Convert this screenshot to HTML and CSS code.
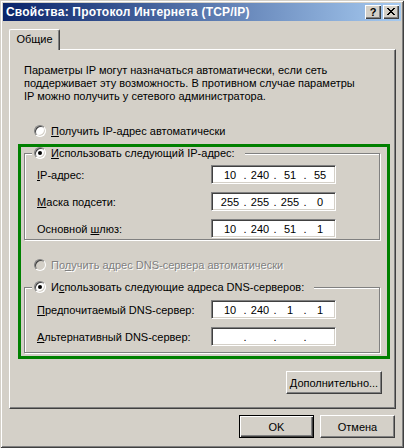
FILE: index.html
```html
<!DOCTYPE html>
<html lang="ru">
<head>
<meta charset="utf-8">
<title>Свойства: Протокол Интернета (TCP/IP)</title>
<link rel="stylesheet" href="styles.css">
</head>
<body>
<div class="window">
  <div class="titlebar">
    <span class="title">Свойства: Протокол Интернета (TCP/IP)</span>
    <div class="caption-btns">
      <span class="cbtn help">?</span>
      <span class="cbtn close"><svg width="8" height="7" viewBox="0 0 8 7" shape-rendering="crispEdges"><path d="M0 0h2v1H0zM6 0h2v1H6zM1 1h2v1H1zM5 1h2v1H5zM2 2h4v1H2zM3 3h2v1H3zM2 4h4v1H2zM1 5h2v1H1zM5 5h2v1H5zM0 6h2v1H0zM6 6h2v1H6z" fill="#000"/></svg></span>
    </div>
  </div>
  <div class="content">
    <div class="tabs"><div class="tab">Общие</div></div>
    <div class="panel">
      <p class="intro">Параметры IP могут назначаться автоматически, если сеть<br>поддерживает эту возможность. В противном случае параметры<br>IP можно получить у сетевого администратора.</p>
      <div class="opt opt-top"><span class="radio"></span><span><u>П</u>олучить IP-адрес автоматически</span></div>
      <div class="highlight">
        <fieldset class="group g-ip">
          <legend class="opt"><span class="radio checked"></span><span><u>И</u>спользовать следующий IP-адрес:</span></legend>
          <div class="field"><span class="lbl"><u>I</u>P-адрес:</span><div class="ipbox"><span>10</span><i>.</i><span>240</span><i>.</i><span>51</span><i>.</i><span>55</span></div></div>
          <div class="field"><span class="lbl"><u>М</u>аска подсети:</span><div class="ipbox"><span>255</span><i>.</i><span>255</span><i>.</i><span>255</span><i>.</i><span>0</span></div></div>
          <div class="field"><span class="lbl">Основной <u>ш</u>люз:</span><div class="ipbox"><span>10</span><i>.</i><span>240</span><i>.</i><span>51</span><i>.</i><span>1</span></div></div>
        </fieldset>
        <div class="opt opt-dns disabled"><span class="radio"></span><span>По<u>л</u>учить адрес DNS-сервера автоматически</span></div>
        <fieldset class="group g-dns">
          <legend class="opt"><span class="radio checked"></span><span>И<u>с</u>пользовать следующие адреса DNS-серверов:</span></legend>
          <div class="field"><span class="lbl"><u>П</u>редпочитаемый DNS-сервер:</span><div class="ipbox"><span>10</span><i>.</i><span>240</span><i>.</i><span>1</span><i>.</i><span>1</span></div></div>
          <div class="field"><span class="lbl"><u>А</u>льтернативный DNS-сервер:</span><div class="ipbox"><span></span><i>.</i><span></span><i>.</i><span></span><i>.</i><span></span></div></div>
        </fieldset>
      </div>
      <div class="adv-row"><button class="btn adv"><u>Д</u>ополнительно...</button></div>
    </div>
    <div class="actions">
      <button class="btn default">OK</button>
      <button class="btn">Отмена</button>
    </div>
  </div>
</div>
</body>
</html>
```
FILE: styles.css
```css
html, body {
  margin: 0;
  padding: 0;
}
body {
  width: 404px;
  height: 448px;
  background: #d4d0c8;
  font: 11px "Liberation Sans", Arial, sans-serif;
  color: #000;
}
.window {
  box-sizing: border-box;
  width: 404px;
  height: 448px;
  padding: 3px;
  background: #d4d0c8;
  box-shadow: inset 1px 1px 0 #d4d0c8, inset -1px -1px 0 #404040, inset 2px 2px 0 #fff, inset -2px -2px 0 #808080;
  display: flex;
  flex-direction: column;
}
.titlebar {
  height: 18px;
  flex: none;
  background: linear-gradient(to right, #0a246a, #a6caf0);
  display: flex;
  align-items: center;
  padding: 0 2px 0 2px;
}
.title {
  flex: 1;
  color: #fff;
  font-weight: bold;
  font-size: 12px;
  letter-spacing: 0.2px;
  white-space: nowrap;
  padding-left: 1px;
}
.caption-btns {
  display: flex;
  gap: 2px;
}
.cbtn {
  box-sizing: border-box;
  width: 16px;
  height: 14px;
  background: #d4d0c8;
  box-shadow: inset 1px 1px 0 #fff, inset -1px -1px 0 #404040, inset -2px -2px 0 #808080;
  display: flex;
  align-items: center;
  justify-content: center;
}
.cbtn.help {
  font-weight: bold;
  font-size: 11px;
  line-height: 14px;
  padding-bottom: 1px;
}
.cbtn.close svg {
  display: block;
  margin-bottom: 1px;
}
.content {
  padding: 8px 5px 0 6px;
}
.tabs {
  display: flex;
}
.tab {
  box-sizing: border-box;
  width: 51px;
  height: 21px;
  margin-bottom: -1px;
  border: 1px solid;
  border-color: #fff #404040 transparent #fff;
  border-bottom: 0;
  border-radius: 2px 2px 0 0;
  box-shadow: inset -1px 0 0 #808080;
  background: #d4d0c8;
  position: relative;
  z-index: 1;
  text-align: center;
  line-height: 19px;
}
.panel {
  box-sizing: border-box;
  height: 360px;
  border: 1px solid;
  border-color: #fff #404040 #404040 #fff;
  box-shadow: inset -1px -1px 0 #808080;
}
.intro {
  margin: 14px 0 0 14px;
  line-height: 13px;
  white-space: nowrap;
}
.opt {
  display: flex;
  align-items: center;
  gap: 5px;
  height: 14px;
  white-space: nowrap;
}
.opt-top {
  margin: 21px 0 0 24px;
}
.radio {
  box-sizing: border-box;
  flex: none;
  width: 12px;
  height: 12px;
  border-radius: 50%;
  background: #fff;
  border: 1px solid;
  border-color: #808080 #fff #fff #808080;
  box-shadow: inset 1px 1px 0 #404040, inset -1px -1px 0 #d4d0c8;
  position: relative;
}
.radio.checked::after {
  content: "";
  position: absolute;
  left: 3px;
  top: 3px;
  width: 4px;
  height: 4px;
  border-radius: 50%;
  background: #000;
}
.disabled {
  color: #808080;
  text-shadow: 1px 1px 0 #fff;
}
.disabled .radio {
  background: #d4d0c8;
}
.highlight {
  border: 3px solid #008000;
  margin: 6px 5px 0 8px;
  padding: 0 0 3px 0;
}
.group {
  margin: 0 7px 0 3px;
  border: 1px solid #808080;
  box-shadow: 1px 1px 0 #fff, inset 1px 1px 0 #fff;
  min-width: 0;
}
.group legend {
  margin-left: 7px;
  padding: 0 10px 0 2px;
  height: 12px;
  line-height: 12px;
  background: #d4d0c8;
}
.g-ip {
  padding: 6px 0 1px 0;
}
.g-dns {
  margin-top: 9px;
  padding: 7px 0 6px 0;
}
.opt-dns {
  margin: 18px 0 0 13px;
}
.field {
  display: flex;
  align-items: center;
  height: 19px;
  padding-left: 12px;
}
.field + .field {
  margin-top: 8px;
}
.lbl {
  flex: 1;
  white-space: nowrap;
}
.ipbox {
  box-sizing: border-box;
  width: 125px;
  height: 19px;
  margin-right: 43px;
  background: #fff;
  border: 1px solid;
  border-color: #808080 #fff #fff #808080;
  box-shadow: inset 1px 1px 0 #404040, inset -1px -1px 0 #d4d0c8;
  display: flex;
  align-items: center;
  padding-left: 6px;
}
.ipbox span {
  width: 24px;
  text-align: center;
}
.ipbox i {
  font-style: normal;
  width: 6px;
  text-align: center;
}
.adv-row {
  display: flex;
  justify-content: flex-end;
  margin-top: 12px;
  padding-right: 13px;
}
.btn {
  box-sizing: border-box;
  width: 75px;
  height: 23px;
  padding: 0;
  font: inherit;
  color: #000;
  background: #d4d0c8;
  border: 1px solid;
  border-color: #fff #404040 #404040 #fff;
  box-shadow: inset -1px -1px 0 #808080;
  border-radius: 0;
}
.btn.adv {
  width: 96px;
}
.btn.default {
  border-color: #000;
  box-shadow: inset 1px 1px 0 #fff, inset -1px -1px 0 #404040, inset -2px -2px 0 #808080;
}
.actions {
  display: flex;
  justify-content: flex-end;
  gap: 6px;
  margin-top: 6px;
  padding-right: 1px;
}
```
